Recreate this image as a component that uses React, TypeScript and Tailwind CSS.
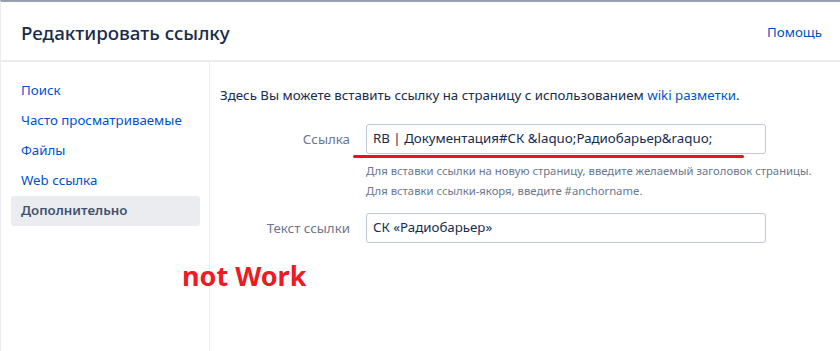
const NAV = ["Поиск", "Часто просматриваемые", "Файлы", "Web ссылка", "Дополнительно"];

export default function App() {
  return (
    <div
      className="relative w-[840px] h-[351px] overflow-hidden bg-white border-t-2 border-t-[#97a0af] border-l border-l-[#ebecf0] text-[#172b4d]"
      style={{ fontFamily: '"Noto Sans", "Open Sans", sans-serif' }}
    >
      {/* Header */}
      <div className="h-[60px] flex items-center justify-between pl-5 pr-[18px] border-b-2 border-[#ebecf0]">
        <h2 className="text-[18.8px] font-medium text-[#172b4d] leading-none pt-[4px] whitespace-nowrap">Редактировать ссылку</h2>
        <a className="text-[13.3px] text-[#0052cc] leading-none pt-[3px]">Помощь</a>
      </div>

      <div className="flex h-full">
        {/* Sidebar */}
        <div className="w-[209px] shrink-0 border-r border-[#ebecf0] pt-[14px] pl-[10px] pr-[9px]">
          {NAV.map((n, i) => (
            <div
              key={n}
              className={
                i === NAV.length - 1
                  ? "h-[30px] flex items-center px-[10px] rounded-[3px] bg-[#ebecf0] text-[13.3px] font-semibold text-[#42526e] whitespace-nowrap"
                  : "h-[30px] flex items-center px-[10px] text-[13.3px] text-[#0052cc] whitespace-nowrap"
              }
            >
              {n}
            </div>
          ))}
        </div>

        {/* Content */}
        <div className="flex-1 pl-[10px] pt-[23px]">
          <p className="text-[13.3px] leading-5 text-[#172b4d] whitespace-nowrap">
            Здесь Вы можете вставить ссылку на страницу с использованием{" "}
            <a className="text-[#0052cc]">wiki разметки</a>.
          </p>

          <div className="mt-[19px] flex">
            <label className="w-[146px] pr-4 text-right text-[13.3px] text-[#6b778c] leading-[30px]">Ссылка</label>
            <div>
              <div className="w-[400px] h-[30px] border border-[#c1c7d0] rounded-[3px] px-[6px] flex items-center text-[13.3px] text-[#172b4d] whitespace-nowrap">
                RB | Документация#СК &amp;laquo;Радиобарьер&amp;raquo;
              </div>
              <div className="mt-[7px] text-[11.3px] leading-5 text-[#6b778c] whitespace-nowrap">
                Для вставки ссылки на новую страницу, введите желаемый заголовок страницы.
                <br />
                Для вставки ссылки-якоря, введите #anchorname.
              </div>
            </div>
          </div>

          <div className="mt-[12px] flex">
            <label className="w-[146px] pr-4 text-right text-[13.3px] text-[#6b778c] leading-[30px]">Текст ссылки</label>
            <div className="w-[400px] h-[30px] border border-[#c1c7d0] rounded-[3px] px-[6px] flex items-center text-[13.3px] text-[#172b4d] whitespace-nowrap">
              СК «Радиобарьер»
            </div>
          </div>
        </div>
      </div>

      {/* Annotations */}
      <div className="absolute left-[352px] top-[153px] w-[391px] h-[3px] rounded-full bg-[#e8141c]" />
      <div className="absolute left-[181px] top-[260px] text-[27px] font-bold text-[#ed1c24] leading-none">
        not Work
      </div>
    </div>
  );
}
